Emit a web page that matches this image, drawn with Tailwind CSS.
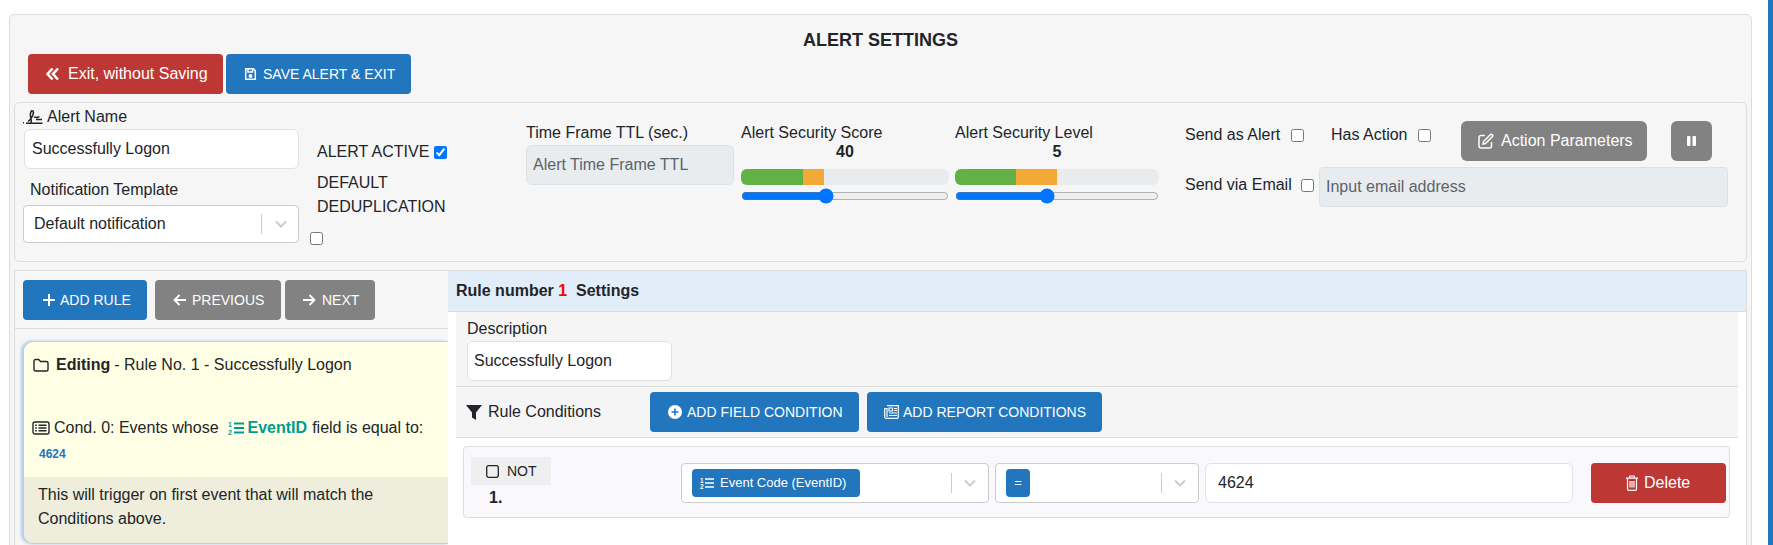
<!DOCTYPE html>
<html>
<head>
    <meta charset="UTF-8">
    <title>Alert Settings</title>
    <script src="https://cdn.jsdelivr.net/npm/@tailwindcss/browser@4"></script>
</head>
<body class="bg-white text-[#212529] font-['Liberation_Sans',sans-serif] text-base leading-6">
<div class="flex h-[545px] w-[1773px] overflow-hidden">
    <div class="w-[1768px] shrink-0 pt-[14px] pl-[9px]">
        <div class="w-[1743px] h-[560px] bg-[#f6f6f6] border border-[#ddd] rounded-[5px]">
            <h1 class="h-[39px] pt-[13px] text-center font-bold text-lg leading-6">ALERT SETTINGS</h1>

            <div class="flex gap-[3px] pl-[18px]">
                <button class="flex items-center h-10 w-[195px] pl-[18px] bg-[#bd3734] text-white rounded-[4px]">
                    <svg class="shrink-0 w-[13px] h-[14px] mr-[9px]" viewBox="0 0 13 14" fill="none" stroke="white" stroke-width="2.6"><path d="M6.500 1.500 1.500 7l5 5.500M12 1.500 7 7l5 5.500"/></svg>
                    Exit, without Saving
                </button>
                <button class="flex items-center h-10 w-[185px] pl-[18px] bg-[#2176bd] text-white text-sm rounded-[4px]">
                    <svg class="shrink-0 w-[13px] h-[14px] mr-[6px]" viewBox="0 0 13 14" fill="none" stroke="white" stroke-width="1.500"><path d="M1.700 1.700h7.600l2 2v8.600H1.700z"/><path d="M4 2v3h4.500V2"/><circle cx="6.500" cy="9" r="1.200" fill="white"/></svg>
                    SAVE ALERT &amp; EXIT
                </button>
            </div>

            <!-- alert header panel -->
            <div class="flex items-start h-40 w-[1733px] ml-1 mt-2 border border-[#ddd] rounded-[5px]">
                <div class="w-[295px] pl-[8px] pt-[2px]">
                    <div class="flex items-center">
                        <svg class="shrink-0 w-[20px] h-[16px] mr-[4px]" viewBox="0 0 20 16" fill="none" stroke="#212529" stroke-width="1.500"><path d="M0 13.800h1M3 14.200h16.500M5 12.500C8.500 10 11.500 4 10 2 8.500.5 6.800 4 7.500 7.500c.4 2.500 1.500 4.500.5 6.500M11 8.500c1.500-1.200 2 .5 3 0s1.500-1 2.500-.3M13 10.500h6"/></svg>
                        Alert Name
                    </div>
                    <input class="block w-[275px] h-10 ml-[1px] px-[7px] bg-white border border-[#dee2e6] rounded-[6px]" value="Successfully Logon">
                    <div class="mt-[9px] pl-[7px]">Notification Template</div>
                    <div class="flex items-center w-[276px] h-[38px] mt-[3px] pl-[10px] bg-white border border-[#ccc] rounded-[4px]">
                        <span class="w-[227px]">Default notification</span>
                        <span class="w-px h-5 bg-[#ccc]"></span>
                        <svg class="shrink-0 w-[14px] h-[14px] ml-[12px]" viewBox="0 0 14 14" fill="none" stroke="#ccc" stroke-width="2"><path d="m2 4.500 5 5 5-5"/></svg>
                    </div>
                </div>
                <div class="w-[216px] pt-[37px]">
                    <div class="flex items-center pl-[7px]">ALERT ACTIVE <input type="checkbox" checked class="ml-[5px] accent-[#0075ff]"></div>
                    <div class="mt-[7px] pl-[7px] w-[120px]">DEFAULT DEDUPLICATION</div>
                    <input type="checkbox" class="block mt-[13px]">
                </div>
                <div class="w-[208px] pt-[18px]">
                    <div>Time Frame TTL (sec.)</div>
                    <div class="h-10 px-[6px] leading-[38px] bg-[#e9ecef] border border-[#dee2e6] rounded-[6px] text-[#5c636a]">Alert Time Frame TTL</div>
                </div>
                <div class="w-[208px] ml-[7px] pt-[18px]">
                    <div class="h-[19px]">Alert Security Score</div>
                    <div class="text-center font-bold">40</div>
                    <div class="flex h-4 mt-[5px] bg-[#e9ecef] rounded-[6px] overflow-hidden">
                        <div class="w-[30%] bg-[#62b146]"></div>
                        <div class="w-[10%] bg-[#f3a936]"></div>
                    </div>
                    <input type="range" min="0" max="100" value="40" class="block w-[208px] h-4 mt-[3px] accent-[#0075ff]">
                </div>
                <div class="w-[204px] ml-[6px] pt-[18px]">
                    <div class="h-[19px]">Alert Security Level</div>
                    <div class="text-center font-bold">5</div>
                    <div class="flex h-4 mt-[5px] bg-[#e9ecef] rounded-[6px] overflow-hidden">
                        <div class="w-[30%] bg-[#62b146]"></div>
                        <div class="w-[20%] bg-[#f3a936]"></div>
                    </div>
                    <input type="range" min="1" max="10" value="5" class="block w-[204px] h-4 mt-[3px] accent-[#0075ff]">
                </div>
                <div class="ml-[26px] pt-[18px]">
                    <div class="flex items-start">
                        <span class="w-[106px] mt-[2px]">Send as Alert</span>
                        <input type="checkbox" class="mt-[8px]">
                        <span class="w-[87px] ml-[27px] mt-[2px]">Has Action</span>
                        <input type="checkbox" class="mt-[8px]">
                        <button class="flex items-center h-10 w-[186px] ml-[30px] pl-[17px] bg-[#828282] text-white rounded-[6px]">
                            <svg class="shrink-0 w-[16px] h-[16px] mr-[7px]" viewBox="0 0 16 16" fill="none" stroke="white" stroke-width="1.500"><path d="M7 2.500H3a2 2 0 0 0-2 2V13a2 2 0 0 0 2 2h8.500a2 2 0 0 0 2-2V9"/><path d="M5.500 8.500 12.300 1.700a1.300 1.300 0 0 1 2 2L7.500 10.500l-2.500.5z"/></svg>
                            Action Parameters
                        </button>
                        <button class="flex items-center justify-center h-10 w-[41px] ml-6 bg-[#828282] rounded-[6px]">
                            <svg class="shrink-0 w-[9px] h-[10px]" viewBox="0 0 9 10" fill="white"><rect width="3.500" height="10" rx="1"/><rect x="5.500" width="3.500" height="10" rx="1"/></svg>
                        </button>
                    </div>
                    <div class="flex items-start mt-[6px]">
                        <span class="w-[116px] mt-[6px]">Send via Email</span>
                        <input type="checkbox" class="mt-[12px]">
                        <div class="w-[409px] h-10 ml-[5px] px-[6px] leading-[38px] bg-[#e9ecef] border border-[#dee2e6] rounded-[4px] text-[#5c636a]">Input email address</div>
                    </div>
                </div>
            </div>

            <!-- rules -->
            <div class="flex w-[1733px] ml-1 mt-2">
                <div class="w-[434px] h-[280px] border-t border-l border-[#ddd]">
                    <div class="flex h-[58px] pt-[9px] pl-2 border-b border-[#ddd] text-sm">
                        <button class="flex items-center h-10 w-[124px] pl-[20px] bg-[#2176bd] text-white rounded-[4px]">
                            <svg class="shrink-0 w-[12px] h-[12px] mr-[5px]" viewBox="0 0 12 12" stroke="white" stroke-width="2"><path d="M6 0v12M0 6h12"/></svg>
                            ADD RULE
                        </button>
                        <button class="flex items-center h-10 w-[126px] ml-2 pl-[18px] bg-[#828282] text-white rounded-[4px]">
                            <svg class="shrink-0 w-[13px] h-[12px] mr-[6px]" viewBox="0 0 13 12" fill="none" stroke="white" stroke-width="1.800"><path d="M13 6H1.500M6.500 1l-5 5 5 5"/></svg>
                            PREVIOUS
                        </button>
                        <button class="flex items-center h-10 w-[90px] ml-1 pl-[18px] bg-[#828282] text-white rounded-[4px]">
                            <svg class="shrink-0 w-[13px] h-[12px] mr-[6px]" viewBox="0 0 13 12" fill="none" stroke="white" stroke-width="1.800"><path d="M0 6h11.500M6.500 1l5 5-5 5"/></svg>
                            NEXT
                        </button>
                    </div>
                    <div class="w-[425px] h-[203px] mt-3 ml-2 bg-[#ffffe6] border-t border-l border-b border-[#ccc] rounded-l-[10px] shadow-[-2px_0_3px_#a9cdec] overflow-hidden">
                        <div class="flex items-center h-[135px] flex-col">
                            <div class="flex items-center w-full h-6 mt-[11px] pl-[9px]">
                                <svg class="shrink-0 w-[16px] h-[14px] mr-[7px]" viewBox="0 0 16 14" fill="none" stroke="#212529" stroke-width="1.400"><path d="M1 3a1.500 1.500 0 0 1 1.500-1.500h3.200L7.500 3.500h6A1.500 1.500 0 0 1 15 5v6.500a1.500 1.500 0 0 1-1.500 1.500h-11A1.500 1.500 0 0 1 1 11.500z"/></svg>
                                <b>Editing</b><span class="ml-[4px]">- Rule No. 1 - Successfully Logon</span>
                            </div>
                            <div class="flex items-center w-full h-6 mt-[39px] pl-[8px]">
                                <svg class="shrink-0 w-[18px] h-[14px] mr-[4px]" viewBox="0 0 18 14" fill="none" stroke="#212529" stroke-width="1.400"><rect x="1" y="1" width="16" height="12" rx="2"/><path d="M6.500 4.200h8M6.500 7h8M6.500 9.800h8M3.200 4.200h1.600M3.200 7h1.600M3.200 9.800h1.600"/></svg>
                                <span>Cond. 0: Events whose</span>
                                <svg class="shrink-0 w-[16px] h-[14px] ml-[9px] mr-1" viewBox="0 0 16 14" fill="#009a93" stroke="#009a93"><text x="0" y="6" font-size="7" font-weight="700" stroke="none" font-family="Liberation Sans">1</text><text x="0" y="13.500" font-size="7" font-weight="700" stroke="none" font-family="Liberation Sans">2</text><path d="M6 2.500h10M6 7h10M6 11.500h10" stroke-width="1.800"/></svg>
                                <b class="text-[#009a93]">EventID</b>
                                <span class="ml-[5px]">field is equal to:</span>
                            </div>
                            <div class="w-full pl-[15px] mt-[6px] text-xs font-bold text-[#2176bd]">4624</div>
                        </div>
                        <div class="h-[67px] pt-[6px] pl-[14px] bg-[#efeedd]">This will trigger on first event that will match the<br>Conditions above.</div>
                    </div>
                </div>

                <div class="w-[1299px] h-[280px] bg-white border-t border-r border-[#ddd]">
                    <div class="h-[41px] pl-[8px] leading-[40px] font-bold bg-[#e1edf9] border-b border-[#ddd]">Rule number <span class="text-[#f00]">1</span>&nbsp; Settings</div>
                    <div class="w-[1282px] ml-[8px] h-[75px] pt-[5px] pl-[11px] bg-[#f5f5f5] border-b border-[#ddd]">
                        <div>Description</div>
                        <input class="block w-[205px] h-10 px-[6px] bg-white border border-[#dee2e6] rounded-[6px]" value="Successfully Logon">
                    </div>
                    <div class="flex items-start w-[1282px] ml-[8px] h-[51px] pt-[5px] bg-[#f5f5f5] border-b border-[#ddd] text-sm">
                        <div class="flex items-center w-[194px] h-10 pl-[10px] text-base">
                            <svg class="shrink-0 w-[16px] h-[15px] mr-[6px]" viewBox="0 0 16 15" fill="#212529"><path d="M0 0h16l-6 7.500V15l-4-2.500v-5z"/></svg>
                            Rule Conditions
                        </div>
                        <button class="flex items-center h-10 w-[209px] pl-[18px] bg-[#2176bd] text-white rounded-[4px]">
                            <svg class="shrink-0 w-[14px] h-[14px] mr-[5px]" viewBox="0 0 14 14"><circle cx="7" cy="7" r="7" fill="white"/><path d="M7 3.500v7M3.500 7h7" stroke="#2176bd" stroke-width="1.600"/></svg>
                            ADD FIELD CONDITION
                        </button>
                        <button class="flex items-center h-10 w-[235px] ml-2 pl-[17px] bg-[#2176bd] text-white rounded-[4px]">
                            <svg class="shrink-0 w-[15px] h-[14px] mr-1" viewBox="0 0 15 14" fill="none" stroke="white" stroke-width="1.200"><path d="M3 .7h11.300v11A1.600 1.600 0 0 1 12.700 13.300H2A1.400 1.400 0 0 1 .7 12V3.500H3V12"/><path d="M5 3h3.500v3H5zM10 3.500h3M10 5.500h3M5 8h8M5 10.500h8"/></svg>
                            ADD REPORT CONDITIONS
                        </button>
                    </div>
                    <div class="flex items-start w-[1267px] h-[72px] mt-2 ml-[15px] pl-[7px] pt-[10px] bg-[#f8f8fd] border border-[#ddd] rounded-[4px]">
                        <div class="w-[210px]">
                            <div class="flex items-center w-[80px] h-7 pl-[15px] bg-[#efefef] text-sm">
                                <svg class="shrink-0 w-[13px] h-[13px] mr-[8px]" viewBox="0 0 13 13" fill="none" stroke="#212529" stroke-width="1.300"><rect x=".7" y=".7" width="11.600" height="11.600" rx="2"/></svg>
                                NOT
                            </div>
                            <div class="pl-[18px] pt-[1px] font-bold">1.</div>
                        </div>
                        <div class="flex items-center w-[308px] h-10 mt-[6px] pl-[10px] bg-white border border-[#ccc] rounded-[4px]">
                            <span class="flex items-center w-[168px] h-7 pl-[8px] bg-[#2176bd] text-white text-[13px] rounded-[4px]">
                                <svg class="shrink-0 w-[14px] h-[12px] mr-[6px]" viewBox="0 0 14 12" fill="white" stroke="white"><text x="0" y="5.500" font-size="6.500" font-weight="700" stroke="none" font-family="Liberation Sans">1</text><text x="0" y="12" font-size="6.500" font-weight="700" stroke="none" font-family="Liberation Sans">2</text><path d="M5 2h9M5 6h9M5 10h9" stroke-width="1.300"/></svg>
                                Event Code (EventID)
                            </span>
                            <span class="w-px h-5 ml-[91px] bg-[#ccc]"></span>
                            <svg class="shrink-0 w-[14px] h-[14px] ml-[11px]" viewBox="0 0 14 14" fill="none" stroke="#ccc" stroke-width="2"><path d="m2 4.500 5 5 5-5"/></svg>
                        </div>
                        <div class="flex items-center w-[204px] h-10 mt-[6px] ml-[6px] pl-[10px] bg-white border border-[#ccc] rounded-[4px]">
                            <span class="w-6 h-7 leading-7 text-center bg-[#2176bd] text-white text-[13px] rounded-[4px]">=</span>
                            <span class="w-px h-5 ml-[131px] bg-[#ccc]"></span>
                            <svg class="shrink-0 w-[14px] h-[14px] ml-[11px]" viewBox="0 0 14 14" fill="none" stroke="#ccc" stroke-width="2"><path d="m2 4.500 5 5 5-5"/></svg>
                        </div>
                        <input class="block w-[368px] h-10 mt-[6px] ml-[6px] px-3 bg-white border border-[#dee2e6] rounded-[6px]" value="4624">
                        <button class="flex items-center h-10 w-[135px] mt-[6px] ml-[18px] pl-[34px] bg-[#bd3734] text-white rounded-[4px]">
                            <svg class="shrink-0 w-[14px] h-[16px] mr-[5px]" viewBox="0 0 14 16" fill="none" stroke="white" stroke-width="1.200"><path d="M1 3.200h12M4.800 3V1h4.400v2M2.500 3.500V14a1.300 1.300 0 0 0 1.300 1.300h6.400a1.300 1.300 0 0 0 1.300-1.300V3.500M5 6v6.500M7 6v6.500M9 6v6.500"/></svg>
                            Delete
                        </button>
                    </div>
                </div>
            </div>
        </div>
    </div>
    <div class="w-[5px] bg-[#2176bd]"></div>
</div>
</body>
</html>
